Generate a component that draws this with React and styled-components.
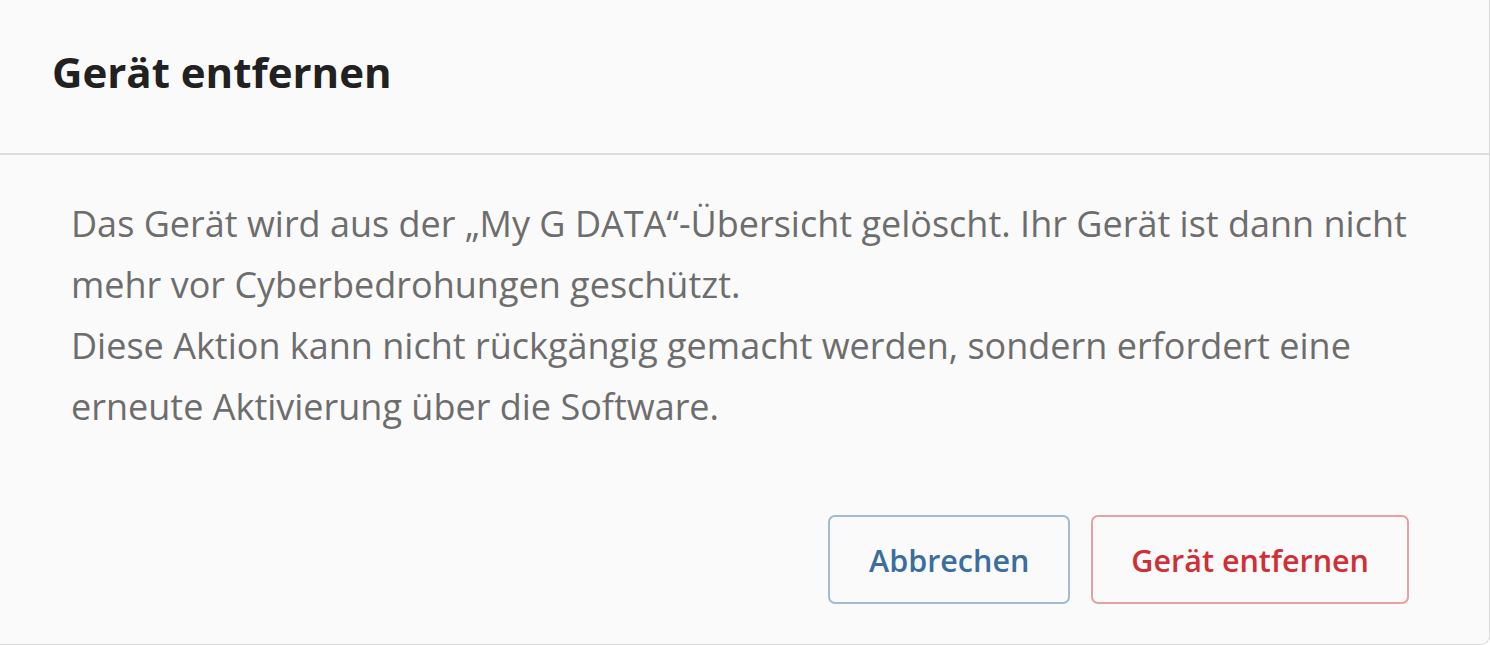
import React from "react";
import styled, { createGlobalStyle } from "styled-components";

const GlobalStyle = createGlobalStyle`
  html, body {
    margin: 0;
    background: #ffffff;
  }
  body {
    font-family: "Open Sans", "Noto Sans", sans-serif;
    -webkit-font-smoothing: antialiased;
  }
`;

const Dialog = styled.div`
  box-sizing: border-box;
  width: 1490px;
  height: 645px;
  display: flex;
  flex-direction: column;
  background: #fafafa;
  border-right: 1px solid #dadada;
  border-bottom: 1px solid #dadada;
  border-bottom-right-radius: 9px;
`;

const Header = styled.div`
  padding: 51px 52px 60px;
  border-bottom: 2px solid #dedede;
`;

const Title = styled.h2`
  margin: 0;
  font-size: 42px;
  line-height: 42px;
  font-weight: 700;
  color: #212121;
`;

const Body = styled.div`
  flex: 1;
  display: flex;
  flex-direction: column;
  padding: 38px 70px 40px 71px;
`;

const Text = styled.p`
  margin: 0;
  font-size: 36px;
  line-height: 61px;
  color: #6d6d6d;
`;

const Actions = styled.div`
  margin-top: auto;
  display: flex;
  justify-content: flex-end;
  gap: 21px;
  padding-right: 10px;
`;

const Button = styled.button`
  box-sizing: border-box;
  height: 89px;
  padding: 0 ${({ danger }) => (danger ? "38px" : "39px")};
  border-radius: 7px;
  border: 2px solid ${({ danger }) => (danger ? "#e4a0a2" : "#a0bbd2")};
  background: #fafafa;
  color: ${({ danger }) => (danger ? "#cf2f35" : "#3a6ea1")};
  font-family: inherit;
  font-size: 30.5px;
  font-weight: 600;
  cursor: pointer;
`;

export default function App() {
  return (
    <>
      <GlobalStyle />
      <Dialog>
        <Header>
          <Title>Gerät entfernen</Title>
        </Header>
        <Body>
          <Text>
            Das Gerät wird aus der „My G DATA“-Übersicht gelöscht. Ihr Gerät ist
            dann nicht mehr vor Cyberbedrohungen geschützt.
            <br />
            Diese Aktion kann nicht rückgängig gemacht werden, sondern erfordert
            eine erneute Aktivierung über die Software.
          </Text>
          <Actions>
            <Button>Abbrechen</Button>
            <Button danger>Gerät entfernen</Button>
          </Actions>
        </Body>
      </Dialog>
    </>
  );
}
